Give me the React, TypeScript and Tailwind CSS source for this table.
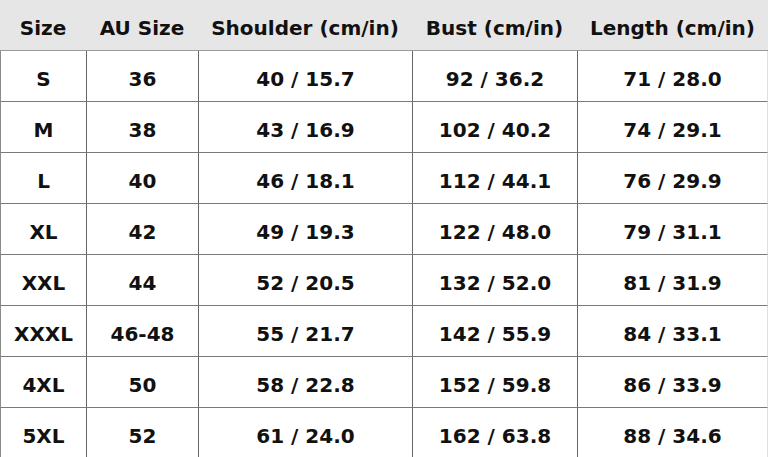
const HEADERS = ["Size", "AU Size", "Shoulder (cm/in)", "Bust (cm/in)", "Length (cm/in)"];

const ROWS: string[][] = [
  ["S", "36", "40 / 15.7", "92 / 36.2", "71 / 28.0"],
  ["M", "38", "43 / 16.9", "102 / 40.2", "74 / 29.1"],
  ["L", "40", "46 / 18.1", "112 / 44.1", "76 / 29.9"],
  ["XL", "42", "49 / 19.3", "122 / 48.0", "79 / 31.1"],
  ["XXL", "44", "52 / 20.5", "132 / 52.0", "81 / 31.9"],
  ["XXXL", "46-48", "55 / 21.7", "142 / 55.9", "84 / 33.1"],
  ["4XL", "50", "58 / 22.8", "152 / 59.8", "86 / 33.9"],
  ["5XL", "52", "61 / 24.0", "162 / 63.8", "88 / 34.6"],
];

export default function App() {
  return (
    <div className="w-[768px] h-[457px] overflow-hidden bg-white font-['DejaVu_Sans',sans-serif] font-bold text-[20px] text-[#111]">
      <div className="grid grid-cols-[86px_112px_214px_165px_191px]">
        {HEADERS.map((h) => (
          <div
            key={h}
            className="h-[51px] pt-[5px] flex items-center justify-center bg-[#e6e6e6] border-b border-[#9a9a9a] whitespace-nowrap"
          >
            {h}
          </div>
        ))}
        {ROWS.map((row) =>
          row.map((cell, i) => (
            <div
              key={row[0] + i}
              className={`h-[51px] pt-[5px] flex items-center justify-center border-b border-[#7a7a7a] whitespace-nowrap ${
                i === 0 ? "border-l border-l-[#8a8a8a]" : "border-l border-l-[#666]"
              } ${i === 4 ? "border-r border-r-[#e0e0e0]" : ""}`}
            >
              {cell}
            </div>
          ))
        )}
      </div>
    </div>
  );
}
